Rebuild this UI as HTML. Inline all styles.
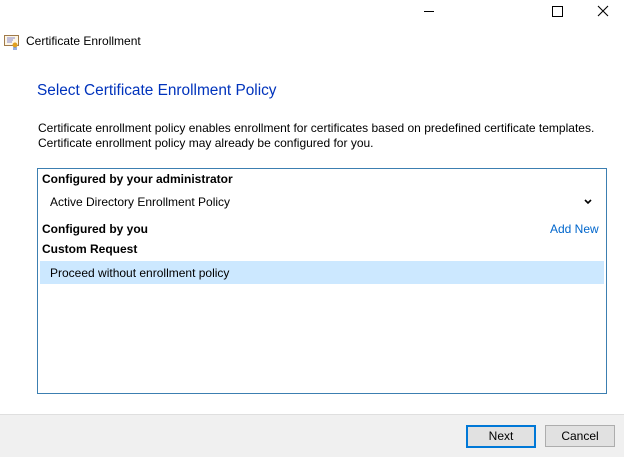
<!DOCTYPE html>
<html><head><style>
body{margin:0;width:624px;height:456px;background:#fff;position:relative;overflow:hidden;font-family:"Segoe UI","Liberation Sans",sans-serif;font-size:12px;color:#000}
.a{position:absolute;white-space:nowrap}
</style></head><body>
<div class="a" style="left:424px;top:11px;width:10px;height:1px;background:#000"></div>
<div class="a" style="left:552px;top:6px;width:9px;height:9px;border:1px solid #000"></div>
<svg class="a" style="left:597px;top:5px" width="12" height="12"><path d="M1 1L11 11M11 1L1 11" stroke="#000" stroke-width="1.1"/></svg>
<svg class="a" style="left:4px;top:34px" width="16" height="16"><rect x="0.5" y="1.5" width="14" height="10" fill="#fdf6e6" stroke="#a07a4a"/><path d="M3 4h8M3 6h6M3 8h5" stroke="#8888cc"/><circle cx="11" cy="11" r="2.5" fill="#e0a020"/><path d="M10 13v3M12 13v3" stroke="#3060c0"/></svg>
<div class="a" style="left:26px;top:34px;font-size:12px">Certificate Enrollment</div>
<div class="a" style="left:37px;top:82px;font-size:15.4px;color:#0033bc">Select Certificate Enrollment Policy</div>
<div class="a" style="left:38px;top:121px;line-height:15px">Certificate enrollment policy enables enrollment for certificates based on predefined certificate templates.<br>Certificate enrollment policy may already be configured for you.</div>
<div class="a" style="left:37px;top:168px;width:568px;height:224px;border:1px solid #3c7fb1"></div>
<div class="a" style="left:42px;top:172px;font-weight:bold">Configured by your administrator</div>
<div class="a" style="left:50px;top:195px">Active Directory Enrollment Policy</div>
<svg class="a" style="left:584px;top:199px" width="8" height="6"><path d="M1 1L4 4L7 1" stroke="#000" stroke-width="1.6" fill="none"/></svg>
<div class="a" style="left:42px;top:222px;font-weight:bold">Configured by you</div>
<div class="a" style="left:550px;top:222px;color:#0066cc">Add New</div>
<div class="a" style="left:42px;top:242px;font-weight:bold">Custom Request</div>
<div class="a" style="left:40px;top:261px;width:564px;height:23px;background:#cce8ff"></div>
<div class="a" style="left:50px;top:266px">Proceed without enrollment policy</div>
<div class="a" style="left:0;top:414px;width:624px;height:42px;background:#f0f0f0;border-top:1px solid #dfdfdf"></div>
<div class="a" style="left:466px;top:425px;width:66px;height:19px;border:2px solid #0078d7;background:#e1e1e1;text-align:center;line-height:19px">Next</div>
<div class="a" style="left:545px;top:425px;width:68px;height:20px;border:1px solid #adadad;background:#e1e1e1;text-align:center;line-height:20px">Cancel</div>
</body></html>
